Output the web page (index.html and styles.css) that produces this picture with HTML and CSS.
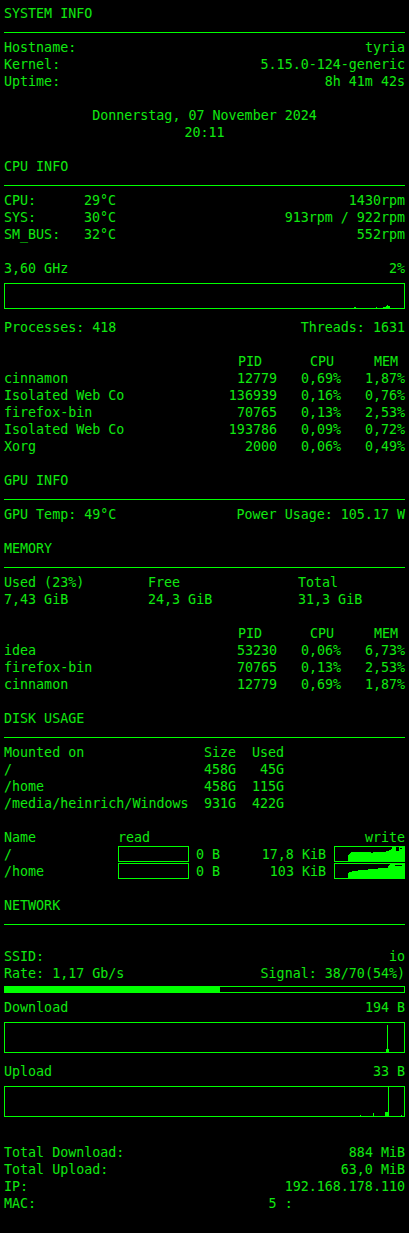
FILE: index.html
```html
<!DOCTYPE html>
<html lang="de">
<head>
<meta charset="utf-8">
<title>Conky</title>
<link rel="stylesheet" href="styles.css">
</head>
<body>
<div class="panel">
  <div class="line">SYSTEM INFO</div>
  <div class="hr"></div>
  <div class="row"><span>Hostname:</span><span>tyria</span></div>
  <div class="row"><span>Kernel:</span><span>5.15.0-124-generic</span></div>
  <div class="row"><span>Uptime:</span><span>8h 41m 42s</span></div>
  <div class="blank"></div>
  <div class="center">Donnerstag, 07 November 2024</div>
  <div class="center">20:11</div>
  <div class="blank"></div>

  <div class="line">CPU INFO</div>
  <div class="hr"></div>
  <div class="temps">
    <span>CPU:</span><span>29°C</span><span class="r">1430rpm</span>
    <span>SYS:</span><span>30°C</span><span class="r">913rpm / 922rpm</span>
    <span>SM_BUS:</span><span>32°C</span><span class="r">552rpm</span>
  </div>
  <div class="blank"></div>
  <div class="row"><span>3,60 GHz</span><span>2%</span></div>
  <div class="graph cpu">
    <svg viewBox="0 0 399 24" preserveAspectRatio="none">
      <rect x="349" y="23" width="2" height="1"/>
      <rect x="371" y="23" width="1" height="1"/>
      <rect x="378" y="23" width="3" height="1"/>
      <rect x="381" y="22" width="4" height="2"/>
      <rect x="382" y="21" width="1" height="3"/>
    </svg>
  </div>
  <div class="row"><span>Processes: 418</span><span>Threads: 1631</span></div>
  <div class="blank"></div>
  <div class="procs">
    <span></span><span class="h pid">PID</span><span class="h">CPU</span><span class="h">MEM</span>
    <span class="n">cinnamon</span><span>12779</span><span>0,69%</span><span>1,87%</span>
    <span class="n">Isolated Web Co</span><span>136939</span><span>0,16%</span><span>0,76%</span>
    <span class="n">firefox-bin</span><span>70765</span><span>0,13%</span><span>2,53%</span>
    <span class="n">Isolated Web Co</span><span>193786</span><span>0,09%</span><span>0,72%</span>
    <span class="n">Xorg</span><span>2000</span><span>0,06%</span><span>0,49%</span>
  </div>
  <div class="blank"></div>

  <div class="line">GPU INFO</div>
  <div class="hr"></div>
  <div class="row"><span>GPU Temp: 49°C</span><span>Power Usage: 105.17 W</span></div>
  <div class="blank"></div>

  <div class="line">MEMORY</div>
  <div class="hr"></div>
  <div class="mem">
    <span>Used (23%)</span><span>Free</span><span>Total</span>
    <span>7,43 GiB</span><span>24,3 GiB</span><span>31,3 GiB</span>
  </div>
  <div class="blank"></div>
  <div class="procs">
    <span></span><span class="h pid">PID</span><span class="h">CPU</span><span class="h">MEM</span>
    <span class="n">idea</span><span>53230</span><span>0,06%</span><span>6,73%</span>
    <span class="n">firefox-bin</span><span>70765</span><span>0,13%</span><span>2,53%</span>
    <span class="n">cinnamon</span><span>12779</span><span>0,69%</span><span>1,87%</span>
  </div>
  <div class="blank"></div>

  <div class="line">DISK USAGE</div>
  <div class="hr"></div>
  <div class="disks">
    <span>Mounted on</span><span class="r">Size</span><span class="r">Used</span>
    <span>/</span><span class="r">458G</span><span class="r">45G</span>
    <span>/home</span><span class="r">458G</span><span class="r">115G</span>
    <span>/media/heinrich/Windows</span><span class="r">931G</span><span class="r">422G</span>
  </div>
  <div class="blank"></div>
  <div class="io">
    <span>Name</span><span>read</span><span></span><span class="r">write</span>

    <span>/</span>
    <span class="rbar"></span>
    <span class="io-vals"><span>0 B</span><span>17,8 KiB</span></span>
    <span class="wgraph">
      <svg viewBox="0 0 69 14" preserveAspectRatio="none">
        <polygon points="13,14 13,8 15,6 17,5 35,5 37,6 39,5 50,5 52,4 55,3 57,2 57,0 61,0 61,4 64,4 64,0 69,0 69,14"/>
        <rect class="cut" x="65" y="1" width="2" height="1"/>
      </svg>
    </span>

    <span>/home</span>
    <span class="rbar"></span>
    <span class="io-vals"><span>0 B</span><span>103 KiB</span></span>
    <span class="wgraph">
      <svg viewBox="0 0 69 14" preserveAspectRatio="none">
        <polygon points="13,14 13,9 18,7 28,6 38,5 48,4 53,4 53,2 55,0 69,0 69,14"/>
        <rect class="cut" x="60" y="1" width="7" height="1"/>
      </svg>
    </span>
  </div>
  <div class="blank"></div>

  <div class="line">NETWORK</div>
  <div class="hr"></div>
  <div class="blank"></div>
  <div class="row"><span>SSID:</span><span>io</span></div>
  <div class="row"><span>Rate: 1,17 Gb/s</span><span>Signal: 38/70(54%)</span></div>
  <div class="sigbar"><div class="sigfill" style="width: 54%"></div></div>
  <div class="row"><span>Download</span><span>194 B</span></div>
  <div class="graph net">
    <svg viewBox="0 0 399 29" preserveAspectRatio="none">
      <rect x="382" y="2" width="1" height="27"/>
      <rect x="381" y="26" width="3" height="3"/>
    </svg>
  </div>
  <div class="row"><span>Upload</span><span>33 B</span></div>
  <div class="graph net">
    <svg viewBox="0 0 399 29" preserveAspectRatio="none">
      <rect x="355" y="28" width="1" height="1"/>
      <rect x="368" y="26" width="1" height="3"/>
      <rect x="380" y="25" width="4" height="4"/>
      <rect x="383" y="0" width="1" height="29"/>
      <rect x="396" y="28" width="1" height="1"/>
    </svg>
  </div>
  <div class="blank"></div>
  <div class="row"><span>Total Download:</span><span>884 MiB</span></div>
  <div class="row"><span>Total Upload:</span><span>63,0 MiB</span></div>
  <div class="row"><span>IP:</span><span>192.168.178.110</span></div>
  <div class="row"><span>MAC:</span><span class="mac">5 :              </span></div>
</div>
</body>
</html>
```

FILE: styles.css
```css
html {
  background: #000;
}

body {
  margin: 0;
  background: #000;
  color: #10e810;
  font-family: "DejaVu Sans Mono", "Liberation Mono", monospace;
  font-size: 13.33px;
  line-height: 17px;
}

.panel {
  width: 401px;
  padding: 5px 4px 0 4px;
}

.line,
.center,
.row {
  height: 17px;
  white-space: pre;
}

.blank {
  height: 17px;
}

.center {
  text-align: center;
}

.row {
  display: flex;
  justify-content: space-between;
}

.hr {
  height: 10px;
  border-bottom: 1px solid #00ff00;
  margin-bottom: 6px;
}

.r {
  text-align: right;
}

.temps {
  display: grid;
  grid-template-columns: 80px auto 1fr;
  grid-auto-rows: 17px;
}

.graph {
  box-sizing: border-box;
  border: 1px solid #00ff00;
}

.graph svg {
  display: block;
  width: 100%;
  height: 100%;
  fill: #00ff00;
}

.graph.cpu {
  height: 26px;
  margin: 6px 0 10px;
}

.graph.net {
  height: 31px;
  margin: 6px 0 10px;
}

.procs {
  display: grid;
  grid-template-columns: 1fr 64px 64px 64px;
  grid-auto-rows: 17px;
  text-align: right;
}

.procs .n {
  text-align: left;
  white-space: pre;
}

.procs .h {
  padding-right: 7px;
}

.procs .h.pid {
  padding-right: 15px;
}

.mem {
  display: grid;
  grid-template-columns: 144px 150px 1fr;
  grid-auto-rows: 17px;
}

.disks {
  display: grid;
  grid-template-columns: 192px 40px 48px;
  grid-auto-rows: 17px;
  white-space: pre;
}

.io {
  display: grid;
  grid-template-columns: 114px 71px 1fr 71px;
  grid-auto-rows: 17px;
}

.io .r {
  text-align: right;
}

.rbar {
  box-sizing: border-box;
  height: 16px;
  border: 1px solid #00ff00;
}

.io-vals {
  display: flex;
  justify-content: space-between;
  padding: 0 8px 0 7px;
}

.wgraph {
  box-sizing: border-box;
  height: 16px;
  border: 1px solid #00ff00;
}

.wgraph svg {
  display: block;
  width: 100%;
  height: 100%;
  fill: #00ff00;
  shape-rendering: crispEdges;
}

.wgraph .cut {
  fill: #000;
}

.sigbar {
  box-sizing: border-box;
  height: 7px;
  margin: 4px 0 6px;
  border: 1px solid #00ff00;
}

.sigfill {
  height: 100%;
  background: #00ff00;
}

.mac {
  white-space: pre;
}
```
